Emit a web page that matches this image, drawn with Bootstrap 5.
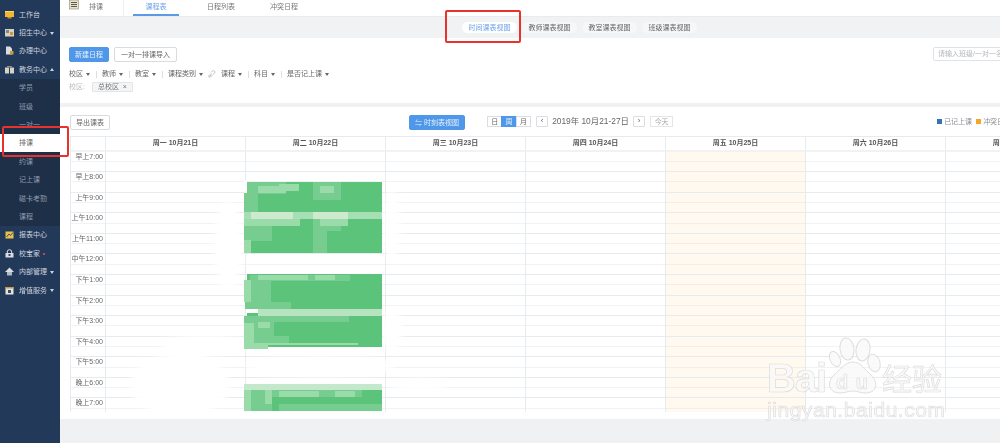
<!DOCTYPE html>
<html lang="zh">
<head>
<meta charset="utf-8">
<title>排课</title>
<link rel="stylesheet" href="https://cdn.jsdelivr.net/npm/bootstrap@5.3.0/dist/css/bootstrap.min.css">
<style>
html,body{height:443px;overflow:hidden;}
body{font-family:"Liberation Sans","Noto Sans CJK SC",sans-serif;font-size:7px;line-height:1.3;color:#666;background:#f0f1f3;position:relative;}
.app-wrap{height:443px;filter:blur(.3px);}
.side{width:60px;flex:none;background:#23395a;padding-top:5px;color:#ccd3dd;}
.side-item{height:18.4px;padding-left:4px;gap:4px;white-space:nowrap;}
.side-ico{width:11px;height:11px;flex:none;}
.side-sub{background:#1e3048;color:#8f9bac;}
.sub-item{height:18.4px;padding-left:19px;}
.sub-item.on{background:#fff;color:#666;width:68px;position:relative;z-index:1;}
.car{display:inline-block;width:0;height:0;border-left:2.5px solid transparent;border-right:2.5px solid transparent;border-top:3px solid currentColor;margin-left:3px;vertical-align:middle;}
.car.up{border-top:0;border-bottom:3px solid currentColor;}
.reddot{display:inline-block;width:2px;height:2px;border-radius:50%;background:#e8506a;margin-left:3px;vertical-align:middle;}
.main-col{width:940px;flex:none;overflow:hidden;}
.topbar{height:17px;background:#fff;border-bottom:1px solid #e9ebee;padding-left:9px;}
.top-ico{width:10px;height:10px;flex:none;margin-right:10px;}
.top-first{width:55px;flex:none;height:16px;border-right:1px solid #eceef1;margin-right:9px;}
.tab-x{width:46px;height:16px;text-align:center;color:#7fa9e0;margin-right:14px;padding-top:2px;}
.tab-x.on{color:#6ea3e8;border-bottom:2px solid #5b9be6;margin-right:20px;}
.tab-y{color:#777;padding-top:2px;white-space:nowrap;}
.tab-gap{margin-right:35px;}
.band{height:21px;background:#f1f2f4;padding-left:402px;gap:5px;}
.pillx{height:11px;width:55px;border-radius:6px;background:#f6f7f8;text-align:center;line-height:11px;color:#666;}
.pillx.on{background:#fff;color:#6ea3e8;}
.filter-box{height:65px;background:#fff;padding:9px 0 0 9px;width:1020px;}
.mybtn{height:15px;line-height:13px;font-size:7px;padding:0 5px;border-radius:2px;border:1px solid #d8dbdf;background:#fff;color:#666;white-space:nowrap;}
.mybtn.blue{background:#4f97e8;border-color:#4f97e8;color:#e8f1fb;}
.mybtn.wide{margin-left:5px;padding:0 6px;}
.searchx{height:14px;width:150px;margin-left:756px;border:1px solid #dfe2e6;border-radius:2px;padding:0 4px;line-height:12px;color:#b3b7bd;}
.fline{margin-top:7px;height:10px;white-space:nowrap;color:#666;}
.fline .sepx{width:1px;height:7px;background:#dcdfe3;margin:0 5.5px;}
.linkx{margin:0 5px;}
.tagline{margin-top:2px;height:11px;color:#b8bcc2;}
.tagx{height:10px;line-height:8px;border:1px solid #e3e5e8;background:#f4f5f6;color:#777;padding:0 5px;margin-left:7px;border-radius:1px;}
.gapband{height:4px;background:#f0f1f3;}
.cal-box{height:312px;background:#fff;padding:8px 0 0 10px;width:1040px;}
.cal-tools{height:21px;width:1015px;}
.view-btn{margin-left:299px;}
.seg{height:11px;margin-left:23px;margin-top:1px;}
.seg span{width:15.4px;height:11px;line-height:9px;text-align:center;border:1px solid #dadde1;color:#666;margin-left:-1px;}
.seg span.on{background:#4f97e8;border-color:#4f97e8;color:#e8f1fb;}
.arrowb{width:12px;height:11px;line-height:8px;text-align:center;border:1px solid #dadde1;border-radius:1px;color:#666;font-size:8px;margin-top:1px;}
.arrow-l{margin-left:5px;}
.ym{font-size:8.4px;color:#666;margin:0 5px 0 4px;width:76px;white-space:nowrap;margin-top:1px;line-height:11px;}
.todayb{width:23px;height:11px;line-height:9px;text-align:center;border:1px solid #e3e5e8;color:#aaa;margin-left:5px;margin-top:1px;}
.legend-x{margin-left:264px;white-space:nowrap;color:#8a8f96;margin-top:2px;}
.sq{display:inline-block;width:5px;height:5px;margin-right:2px;}
.sq-a{background:#3573b5;}
.sq-b{background:#f5a623;margin-left:4px;}
.grid-wrap{position:relative;width:1015px;height:276px;overflow:hidden;}
.cal-head,.cal-line{display:grid;grid-template-columns:35px repeat(7,140px);}
.cal-head{height:15.5px;}
.cal-head>div{border:1px solid #e6ebf0;border-right:0;border-bottom:2px solid #f0f2f4;text-align:center;font-weight:700;color:#555;line-height:12px;}
.cal-line{height:20.58px;}
.cal-line>div{border-left:1px solid #e6ebf0;border-bottom:1px solid #e6ebf0;background:linear-gradient(#f0f2f5,#f0f2f5) 0 50%/100% 1px no-repeat #fff;}
.cal-line>div.tm{text-align:right;color:#666;padding:0 2px 0 0;line-height:9px;}
.cal-line>div.today{background-color:#fff9f0;background-image:linear-gradient(#f3eee6,#f3eee6);}
.paint{position:absolute;left:0;top:0;pointer-events:none;}
.soft{filter:blur(.7px);}
.hlbox{position:absolute;border:2px solid #e8322c;border-radius:2px;pointer-events:none;z-index:5;}
.hl-a{left:2px;top:126px;width:67px;height:31px;}
.hl-b{left:445px;top:10px;width:76px;height:33px;}
.wm{position:absolute;left:0;top:0;z-index:6;pointer-events:none;opacity:.85;filter:blur(.4px);}
.wm text{font-family:"Liberation Sans",sans-serif;fill:#fafafa;stroke:#d8d8d8;stroke-width:.7px;}
.wm text.cjk{font-family:"Noto Sans CJK SC",sans-serif;}
</style>
</head>
<body>
<div class="d-flex app-wrap">
  <aside class="side">
    <div class="side-item d-flex align-items-center"><svg class="side-ico" viewBox="0 0 11 11"><rect x="1" y="2" width="9" height="6" fill="#f2b632"/><rect x="1" y="2" width="9" height="1" fill="#f8d67a"/><rect x="3.5" y="8" width="4" height="1.500" fill="#c98f1e"/></svg>工作台</div>
    <div class="side-item d-flex align-items-center"><svg class="side-ico" viewBox="0 0 11 11"><rect x="1" y="2" width="9" height="7.500" fill="#d8d2bd"/><rect x="2" y="3" width="3" height="3" fill="#7c8a99"/><rect x="6" y="5" width="3" height="3" fill="#c99a3c"/></svg><span>招生中心<i class="car"></i></span></div>
    <div class="side-item d-flex align-items-center"><svg class="side-ico" viewBox="0 0 11 11"><path d="M2 1.500h4l2 2v6H2z" fill="#d9dde2"/><rect x="6" y="6" width="3.500" height="3.500" fill="#c99a3c"/></svg>办理中心</div>
    <div class="side-item d-flex align-items-center"><svg class="side-ico" viewBox="0 0 11 11"><path d="M1 3.500h4v6H1zM6 3.500h4v6H6z" fill="#d3d3c8"/><path d="M3 2h5v1.500H3z" fill="#9a8f76"/></svg><span>教务中心<i class="car up"></i></span></div>
    <div class="side-sub">
      <div class="sub-item d-flex align-items-center">学员</div>
      <div class="sub-item d-flex align-items-center">班级</div>
      <div class="sub-item d-flex align-items-center">一对一</div>
      <div class="sub-item on d-flex align-items-center">排课</div>
      <div class="sub-item d-flex align-items-center">约课</div>
      <div class="sub-item d-flex align-items-center">记上课</div>
      <div class="sub-item d-flex align-items-center">磁卡考勤</div>
      <div class="sub-item d-flex align-items-center">课程</div>
    </div>
    <div class="side-item d-flex align-items-center"><svg class="side-ico" viewBox="0 0 11 11"><rect x="1.500" y="2.500" width="8" height="7" fill="#e9c04a"/><path d="M2.500 8l2.500-3 1.500 1.500L9 3.500" stroke="#35506f" stroke-width="1" fill="none"/></svg>报表中心</div>
    <div class="side-item d-flex align-items-center"><svg class="side-ico" viewBox="0 0 11 11"><path d="M1.500 5h8v4.500h-8z" fill="#d9dde2"/><circle cx="5.500" cy="4" r="2.300" fill="none" stroke="#d9dde2"/><rect x="4.500" y="6" width="2" height="2" fill="#35506f"/></svg><span>校宝家<i class="reddot"></i></span></div>
    <div class="side-item d-flex align-items-center"><svg class="side-ico" viewBox="0 0 11 11"><path d="M5.500 1.500L10 6H1z" fill="#d9dde2"/><rect x="3" y="6" width="5" height="3.500" fill="#aebac6"/></svg><span>内部管理<i class="car"></i></span></div>
    <div class="side-item d-flex align-items-center"><svg class="side-ico" viewBox="0 0 11 11"><rect x="1.500" y="2" width="8" height="7.500" fill="#e4e4da"/><rect x="1.500" y="2" width="8" height="1.500" fill="#c99a3c"/><rect x="4" y="5" width="3" height="3" fill="#35506f"/></svg><span>增值服务<i class="car"></i></span></div>
  </aside>

  <main class="main-col">
    <div class="topbar d-flex align-items-start">
      <div class="top-first d-flex align-items-start">
        <svg class="top-ico" viewBox="0 0 10 10"><rect x="0.500" y="0" width="9" height="9" fill="#e9e3c9" stroke="#8c8672" stroke-width=".6"/><path d="M2 2.500h6M2 4.500h6M2 6.500h6" stroke="#4a4a42" stroke-width=".9"/></svg>
        <span class="tab-y">排课</span>
      </div>
      <div class="tab-x on">课程表</div>
      <div class="tab-y ps-2 tab-gap">日程列表</div>
      <div class="tab-y">冲突日程</div>
    </div>
    <div class="band d-flex align-items-center">
      <div class="pillx on">时间课表视图</div>
      <div class="pillx">教师课表视图</div>
      <div class="pillx">教室课表视图</div>
      <div class="pillx">班级课表视图</div>
    </div>
    <div class="filter-box">
      <div class="d-flex align-items-start">
        <button type="button" class="mybtn blue">新建日程</button>
        <button type="button" class="mybtn wide">一对一排课导入</button>
        <div class="searchx">请输入班级/一对一名称</div>
      </div>
      <div class="fline d-flex align-items-center">
        <span>校区<i class="car"></i></span><i class="sepx"></i>
        <span>教师<i class="car"></i></span><i class="sepx"></i>
        <span>教室<i class="car"></i></span><i class="sepx"></i>
        <span>课程类别<i class="car"></i></span>
        <svg class="linkx" width="8" height="8" viewBox="0 0 8 8"><path d="M1.500 6.500l2-2M3 2.500l1.500-1.500a1.200 1.200 0 0 1 2 2L5 4.500M3 3.500L1 5.500a1 1 0 0 0 1.500 1.500L4.500 5" stroke="#aaa" stroke-width=".7" fill="none"/></svg>
        <span>课程<i class="car"></i></span><i class="sepx"></i>
        <span>科目<i class="car"></i></span><i class="sepx"></i>
        <span>是否记上课<i class="car"></i></span>
      </div>
      <div class="tagline d-flex align-items-center">校区:<span class="tagx">总校区 &nbsp;×</span></div>
    </div>
    <div class="gapband"></div>
    <div class="cal-box">
      <div class="cal-tools d-flex align-items-start">
        <button type="button" class="mybtn">导出课表</button>
        <button type="button" class="mybtn blue view-btn">⇋ 时刻表视图</button>
        <div class="seg d-flex"><span>日</span><span class="on">周</span><span>月</span></div>
        <div class="arrowb arrow-l">‹</div>
        <div class="ym">2019年 10月21-27日</div>
        <div class="arrowb">›</div>
        <div class="todayb">今天</div>
        <div class="legend-x"><i class="sq sq-a"></i>已记上课<i class="sq sq-b"></i>冲突日程</div>
      </div>
      <div class="grid-wrap">
        <div class="cal-head"><div></div><div>周一 10月21日</div><div>周二 10月22日</div><div>周三 10月23日</div><div>周四 10月24日</div><div>周五 10月25日</div><div>周六 10月26日</div><div>周日 10月27日</div></div>
        <div class="cal-line"><div class="tm">早上7:00</div><div></div><div></div><div></div><div></div><div class="today"></div><div></div><div></div></div>
        <div class="cal-line"><div class="tm">早上8:00</div><div></div><div></div><div></div><div></div><div class="today"></div><div></div><div></div></div>
        <div class="cal-line"><div class="tm">上午9:00</div><div></div><div></div><div></div><div></div><div class="today"></div><div></div><div></div></div>
        <div class="cal-line"><div class="tm">上午10:00</div><div></div><div></div><div></div><div></div><div class="today"></div><div></div><div></div></div>
        <div class="cal-line"><div class="tm">上午11:00</div><div></div><div></div><div></div><div></div><div class="today"></div><div></div><div></div></div>
        <div class="cal-line"><div class="tm">中午12:00</div><div></div><div></div><div></div><div></div><div class="today"></div><div></div><div></div></div>
        <div class="cal-line"><div class="tm">下午1:00</div><div></div><div></div><div></div><div></div><div class="today"></div><div></div><div></div></div>
        <div class="cal-line"><div class="tm">下午2:00</div><div></div><div></div><div></div><div></div><div class="today"></div><div></div><div></div></div>
        <div class="cal-line"><div class="tm">下午3:00</div><div></div><div></div><div></div><div></div><div class="today"></div><div></div><div></div></div>
        <div class="cal-line"><div class="tm">下午4:00</div><div></div><div></div><div></div><div></div><div class="today"></div><div></div><div></div></div>
        <div class="cal-line"><div class="tm">下午5:00</div><div></div><div></div><div></div><div></div><div class="today"></div><div></div><div></div></div>
        <div class="cal-line"><div class="tm">晚上6:00</div><div></div><div></div><div></div><div></div><div class="today"></div><div></div><div></div></div>
        <div class="cal-line"><div class="tm">晚上7:00</div><div></div><div></div><div></div><div></div><div class="today"></div><div></div><div></div></div>
        <svg class="paint" width="1015" height="276" viewBox="70 136 1015 276">
          <defs><filter id="sm" x="-20%" y="-40%" width="140%" height="180%"><feGaussianBlur stdDeviation="3"/></filter></defs>
          <g fill="#fff" filter="url(#sm)">
            <ellipse cx="228" cy="245" rx="14" ry="45"/>
            <ellipse cx="205" cy="345" rx="45" ry="10"/>
            <ellipse cx="180" cy="385" rx="50" ry="32"/>
            <ellipse cx="320" cy="366" rx="75" ry="10"/>
            <ellipse cx="420" cy="385" rx="30" ry="6"/>
            <ellipse cx="392" cy="225" rx="8" ry="36"/>
            <ellipse cx="392" cy="330" rx="10" ry="22"/>
          </g>
          <g class="soft">
          <rect x="244" y="182" width="138" height="71" fill="#5bc47a"/>
          <g fill="#76cd8f"><rect x="244" y="182" width="42" height="12"/><rect x="244" y="194" width="14" height="18"/><rect x="313" y="182" width="28" height="18"/><rect x="244" y="219" width="28" height="22"/><rect x="313" y="219" width="28" height="12"/><rect x="313" y="231" width="14" height="22"/></g>
          <g fill="#9adbaa"><rect x="258" y="186" width="28" height="7"/><rect x="279" y="184" width="20" height="7"/><rect x="320" y="186" width="14" height="7"/><rect x="244" y="240" width="7" height="13"/><rect x="244" y="219" width="56" height="7"/><rect x="320" y="219" width="28" height="7"/></g>
          <rect x="244" y="212" width="138" height="7" fill="#a6dfb3"/>
          <g fill="#cdeace"><rect x="251" y="212" width="42" height="7"/><rect x="313" y="212" width="35" height="7"/></g>
          <rect x="244" y="180" width="3" height="13" fill="#fff"/>
          <rect x="247" y="274" width="135" height="35" fill="#5bc47a"/>
          <g fill="#76cd8f"><rect x="245" y="280" width="26" height="29"/><rect x="250" y="275" width="100" height="6"/><rect x="271" y="302" width="20" height="7"/></g>
          <g fill="#9adbaa"><rect x="244" y="280" width="7" height="22"/><rect x="258" y="275" width="50" height="5"/><rect x="315" y="275" width="20" height="5"/></g>
          <rect x="258" y="309" width="124" height="7" fill="#b7e3c0"/>
          <rect x="247" y="309" width="11" height="4" fill="#fff"/>
          <rect x="247" y="313" width="11" height="3" fill="#5bc47a"/>
          <rect x="244" y="316" width="138" height="31" fill="#5bc47a"/>
          <g fill="#76cd8f"><rect x="244" y="316" width="30" height="27"/><rect x="274" y="316" width="75" height="6"/><rect x="274" y="336" width="15" height="7"/></g>
          <g fill="#9adbaa"><rect x="244" y="323" width="10" height="20"/><rect x="258" y="322" width="12" height="6"/><rect x="244" y="343" width="24" height="6"/><rect x="268" y="343" width="90" height="2"/></g>
          <rect x="244" y="384" width="138" height="27" fill="#5bc47a"/>
          <rect x="244" y="384" width="138" height="6" fill="#c4e8cb"/>
          <g fill="#76cd8f"><rect x="244" y="390" width="28" height="21"/><rect x="272" y="390" width="90" height="7"/><rect x="279" y="404" width="103" height="7"/></g>
          <g fill="#9adbaa"><rect x="244" y="390" width="7" height="21"/><rect x="265" y="390" width="7" height="14"/><rect x="279" y="391" width="40" height="6"/><rect x="335" y="391" width="20" height="6"/></g>
          </g>
        </svg>
      </div>
    </div>
  </main>
</div>
<div class="hlbox hl-a"></div>
<div class="hlbox hl-b"></div>
<svg class="wm" width="1000" height="443" viewBox="0 0 1000 443">
  <g fill="#fafafa" stroke="#d8d8d8" stroke-width="1">
    <ellipse cx="847" cy="349" rx="7" ry="11" transform="rotate(-8 847 349)"/>
    <ellipse cx="863" cy="350" rx="7" ry="11" transform="rotate(8 863 350)"/>
    <ellipse cx="835" cy="359" rx="5" ry="8" transform="rotate(-25 835 359)"/>
    <ellipse cx="874" cy="363" rx="6" ry="9" transform="rotate(-15 874 363)"/>
    <path d="M853 362c8 0 11 7 18 13 8 8 6 18-6 18-5 0-7-2-12-2s-8 2-13 2c-11 0-14-10-6-18 7-6 11-13 19-13z"/>
  </g>
  <text x="767" y="392" font-size="40" font-weight="700" textLength="60">Bai</text>
  <text x="836" y="389" font-size="20" font-weight="700" textLength="32">du</text>
  <text class="cjk" x="882" y="390" font-size="30" textLength="60">经验</text>
  <text x="767" y="417" font-size="21" textLength="178">jingyan.baidu.com</text>
</svg>
<script src="https://cdn.jsdelivr.net/npm/bootstrap@5.3.0/dist/js/bootstrap.bundle.min.js"></script>
</body>
</html>
